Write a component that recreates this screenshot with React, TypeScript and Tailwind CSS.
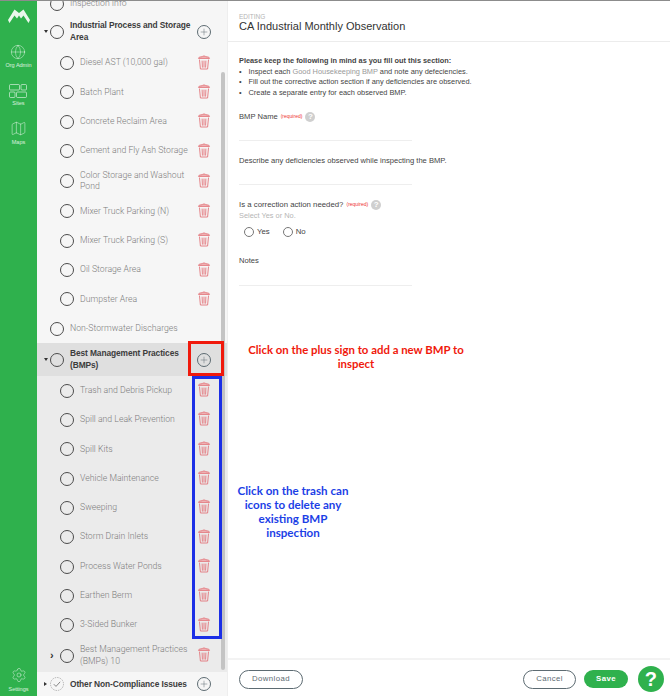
import { Globe, Map as MapIcon, Plus, Settings } from "lucide-react";

type Row = { label: string; kind: "head" | "plain" | "child"; h: number; caret?: string; active?: boolean };

const rows: Row[] = [
    { label: "Inspection Info", kind: "plain", h: 23 },
    { label: "Industrial Process and Storage Area", kind: "head", caret: "down", h: 33.4 },
    { label: "Diesel AST (10,000 gal)", kind: "child", h: 29.33 },
    { label: "Batch Plant", kind: "child", h: 29.33 },
    { label: "Concrete Reclaim Area", kind: "child", h: 29.33 },
    { label: "Cement and Fly Ash Storage", kind: "child", h: 29.33 },
    { label: "Color Storage and Washout Pond", kind: "child", h: 31 },
    { label: "Mixer Truck Parking (N)", kind: "child", h: 29.33 },
    { label: "Mixer Truck Parking (S)", kind: "child", h: 29.33 },
    { label: "Oil Storage Area", kind: "child", h: 29.33 },
    { label: "Dumpster Area", kind: "child", h: 29.33 },
    { label: "Non-Stormwater Discharges", kind: "plain", h: 29.33 },
    { label: "Best Management Practices (BMPs)", kind: "head", caret: "down", active: true, h: 32.6 },
];

const bmpRows: Row[] = [
    { label: "Trash and Debris Pickup", kind: "child", h: 29.33 },
    { label: "Spill and Leak Prevention", kind: "child", h: 29.33 },
    { label: "Spill Kits", kind: "child", h: 29.33 },
    { label: "Vehicle Maintenance", kind: "child", h: 29.33 },
    { label: "Sweeping", kind: "child", h: 29.33 },
    { label: "Storm Drain Inlets", kind: "child", h: 29.33 },
    { label: "Process Water Ponds", kind: "child", h: 29.33 },
    { label: "Earthen Berm", kind: "child", h: 29.33 },
    { label: "3-Sided Bunker", kind: "child", h: 29.33 },
    { label: "Best Management Practices (BMPs) 10", kind: "child", caret: "right", h: 32 },
];

function Logo() {
    return (
        <svg width="22" height="14" viewBox="0 0 22 14" className="text-white/90">
            <path d="M0 11 L6.5 0.5 L11 4 L15.5 0.5 L22 11 L20.5 14 L15.5 6.5 L13 9.5 L11 6.5 L9 9.5 L6.5 6.5 L1.5 14 Z" fill="currentColor" />
        </svg>
    );
}

function SitesIcon() {
    return (
        <svg width="18" height="14" viewBox="0 0 18 14" fill="none" stroke="currentColor" strokeWidth="0.8" className="mt-[2px] text-white/70">
            <rect x="0.5" y="0.5" width="10" height="5.5" rx="1" />
            <rect x="12" y="0.5" width="5.5" height="5.5" rx="1" />
            <rect x="0.5" y="8" width="5.5" height="5.5" rx="1" />
            <rect x="7.5" y="8" width="10" height="5.5" rx="1" />
        </svg>
    );
}

function TrashIcon() {
    return (
        <svg width="14" height="15" viewBox="0 0 14 15" fill="none" stroke="#e2757b" strokeWidth="0.9" className="shrink-0 ml-1 -mt-[2px]">
            <path d="M1.5 3.4 C1.5 2.2 3.4 1.8 5.2 1.7 C5.4 0.8 8.6 0.8 8.8 1.7 C10.6 1.8 12.5 2.2 12.5 3.4 Z" fill="#f0b8ba" />
            <path d="M2.5 4.6 L3.4 14 L10.6 14 L11.5 4.6" strokeLinejoin="round" />
            <path d="M5.1 5.6 L5.4 12.6 M7 5.6 L7 12.6 M8.9 5.6 L8.6 12.6" />
        </svg>
    );
}

function NavItem({ icon, label }: { icon: React.ReactNode; label: string }) {
    return (
        <div className="flex flex-col items-center gap-[2px] h-[38px]">
            {icon}
            <span className="text-[5.5px] leading-[7px] text-white/80">{label}</span>
        </div>
    );
}

function Circle() {
    return <span className="block w-[14px] h-[14px] shrink-0 rounded-full border-[1.2px] border-[#4c4c4c]" />;
}

function CheckCircle() {
    return (
        <svg width="14" height="14" viewBox="0 0 14 14" fill="none" className="shrink-0">
            <circle cx="7" cy="7" r="6.5" stroke="#999" strokeWidth="0.7" strokeDasharray="1.5 1" />
            <path d="M3.8 7.2 L6 9.4 L10.2 4.8" stroke="#777" strokeWidth="0.9" />
        </svg>
    );
}

function AddButton() {
    return (
        <span className="flex items-center justify-center w-[14px] h-[14px] rounded-full border border-[#5d6b72] text-[#5d6b72]">
            <Plus size={10} strokeWidth={1.2} />
        </span>
    );
}

function HelpDot() {
    return <span className="ml-[3px] w-[10px] h-[10px] rounded-full bg-[#cfcfcf] text-white text-[8px] font-bold flex items-center justify-center">?</span>;
}

function ListRow({ row }: { row: Row }) {
    const isChild = row.kind === "child";
    return (
        <div
            style={{ height: row.h }}
            className={`relative flex items-center pr-[16px] ${isChild ? "pl-[23px]" : "pl-[13px]"} ${row.active ? "bg-[#dfdfdf]" : ""}`}
        >
            {row.caret === "down" && <span className="absolute left-[7px] w-0 h-0 border-x-[2px] border-x-transparent border-t-[3px] border-t-[#333]" />}
            {row.caret === "right" && <span className="absolute left-[13px] text-[11px] leading-none font-bold text-[#333]">›</span>}
            <Circle />
            <span
                className={`flex-1 min-w-0 ml-[6px] leading-[11.5px] ${row.kind === "head" ? "text-[8.4px] tracking-[-0.1px] font-bold text-[#3c3c3c]" : "font-['Roboto',sans-serif] font-light text-[8.7px] text-[#7d7d7d]"}`}
            >
                {row.label}
            </span>
            {isChild && <TrashIcon />}
            {row.kind === "head" && <AddButton />}
        </div>
    );
}

export default function App() {
    return (
        <div className="relative w-[670px] h-[696px] overflow-hidden bg-white flex font-['Liberation_Sans',sans-serif] border-t-[1px] border-t-[#8c8c8c]">
            {/* left nav */}
            <aside className="w-[37px] shrink-0 bg-[#2fb14d] flex flex-col items-center pt-[8px]">
                <Logo />
                <div className="mt-[21px] flex flex-col items-center">
                    <NavItem icon={<Globe size={16} strokeWidth={0.9} className="text-white/70" />} label="Org Admin" />
                    <NavItem icon={<SitesIcon />} label="Sites" />
                    <NavItem icon={<MapIcon size={17} strokeWidth={0.9} className="text-white/70" />} label="Maps" />
                </div>
                <div className="mt-auto pb-[3px] flex flex-col items-center gap-[3px]">
                    <Settings size={16} strokeWidth={0.9} className="text-white/70" />
                    <span className="text-[5.5px] leading-[7px] text-white/80">Settings</span>
                </div>
            </aside>

            {/* section list */}
            <div className="relative w-[190px] shrink-0 bg-[#f6f6f6] flex flex-col overflow-hidden">
                <div className="-mt-[9px]">
                    {rows.map((row) => (
                        <ListRow key={row.label} row={row} />
                    ))}
                    <div className="bg-[#ebebeb]">
                        {bmpRows.map((row) => (
                            <ListRow key={row.label} row={row} />
                        ))}
                    </div>
                    <div className="relative h-[25px] pl-[13px] pr-[16px] flex items-center">
                        <span className="absolute left-[7px] w-0 h-0 border-y-[2px] border-y-transparent border-l-[3px] border-l-[#333]" />
                        <CheckCircle />
                        <span className="flex-1 ml-[6px] text-[8.4px] tracking-[-0.1px] font-bold text-[#3c3c3c]">Other Non-Compliance Issues</span>
                        <AddButton />
                    </div>
                </div>
                <div className="absolute left-[184px] top-[71px] bottom-[26px] w-[4px] rounded-full bg-[#c4c4c4]" />
            </div>

            {/* editor */}
            <main className="flex-1 min-w-0 flex flex-col border-l border-l-[#eeeeee]">
                <header className="h-[41px] shrink-0 border-b border-b-[#ececec] pl-[11px] pt-[12px]">
                    <div className="text-[6.5px] leading-[7px] text-[#b5b5b5]">EDITING</div>
                    <div className="text-[11px] leading-[13px] text-[#333]">CA Industrial Monthly Observation</div>
                </header>

                <section className="flex-1 pl-[11px] pt-[14px] text-[#444]">
                    <p className="text-[7.35px] leading-[10.5px] font-bold">Please keep the following in mind as you fill out this section:</p>
                    <ul className="text-[7.4px] leading-[10.5px]">
                        <li className="flex"><span className="w-[9.5px]">•</span><span>Inspect each <span className="text-[#999]">Good Housekeeping BMP</span> and note any defeciencies.</span></li>
                        <li className="flex"><span className="w-[9.5px]">•</span><span>Fill out the corrective action section if any deficiencies are observed.</span></li>
                        <li className="flex"><span className="w-[9.5px]">•</span><span>Create a separate entry for each observed BMP.</span></li>
                    </ul>

                    <div className="mt-[13px] flex items-center h-[12px] text-[7.6px]">
                        BMP Name <span className="ml-[3px] text-[5px] text-[#ee3333]">(required)</span>
                        <HelpDot />
                    </div>
                    <div className="mt-[17px] w-[173px] border-b border-b-[#eeeeee]" />

                    <p className="mt-[15px] text-[7.6px] leading-[10px]">Describe any deficiencies observed while inspecting the BMP.</p>
                    <div className="mt-[18px] w-[173px] border-b border-b-[#eeeeee]" />

                    <div className="mt-[14px] flex items-center h-[12px] text-[7.8px]">
                        Is a correction action needed? <span className="ml-[3px] text-[5px] text-[#ee3333]">(required)</span>
                        <HelpDot />
                    </div>
                    <div className="text-[7.4px] leading-[10px] text-[#b5b5b5]">Select Yes or No.</div>
                    <div className="mt-[5px] ml-[5px] flex items-center text-[7.8px] h-[11px]">
                        <span className="w-[10px] h-[10px] rounded-full border border-[#777]" />
                        <span className="ml-[3px]">Yes</span>
                        <span className="ml-[13px] w-[10px] h-[10px] rounded-full border border-[#777]" />
                        <span className="ml-[3px]">No</span>
                    </div>

                    <div className="mt-[19px] text-[7.6px] leading-[10px]">Notes</div>
                    <div className="mt-[19px] w-[173px] border-b border-b-[#eeeeee]" />
                </section>

                <footer className="h-[38px] shrink-0 border-t-2 border-t-[#f3f3f3] pl-[11px] pr-[6px] pt-[2px] flex items-center text-[7.8px] tracking-[0.4px]">
                    <button className="w-[64px] h-[19px] rounded-full border border-[#5d6b72] text-[#5d6b72]">Download</button>
                    <button className="ml-auto w-[53px] h-[19px] rounded-full border border-[#5d6b72] text-[#5d6b72]">Cancel</button>
                    <button className="ml-[8px] w-[44px] h-[18px] rounded-full bg-[#2fb14d] font-bold text-white">Save</button>
                    <span className="ml-[10px] w-[26px] h-[26px] rounded-full bg-[#2fb14d] text-white text-[20px] font-bold flex items-center justify-center">?</span>
                </footer>
            </main>

            {/* tutorial annotations */}
            <div className="absolute left-[188px] top-[340px] w-[36px] h-[35px] border-[3px] border-[#f0190c]" />
            <div className="absolute left-[192px] top-[375px] w-[30px] h-[263px] border-[3px] border-[#1c2fe6]" />
            <p className="absolute left-[240px] top-[342px] w-[232px] text-center text-[11.4px] leading-[14px] font-['Lato',sans-serif] font-bold text-[#f0190c]">
                Click on the plus sign to add a new BMP to inspect
            </p>
            <p className="absolute left-[232px] top-[483px] w-[122px] text-center text-[11.6px] leading-[14px] font-['Lato',sans-serif] font-bold text-[#1c3fe6]">
                Click on the trash can icons to delete any existing BMP inspection
            </p>
        </div>
    );
}
